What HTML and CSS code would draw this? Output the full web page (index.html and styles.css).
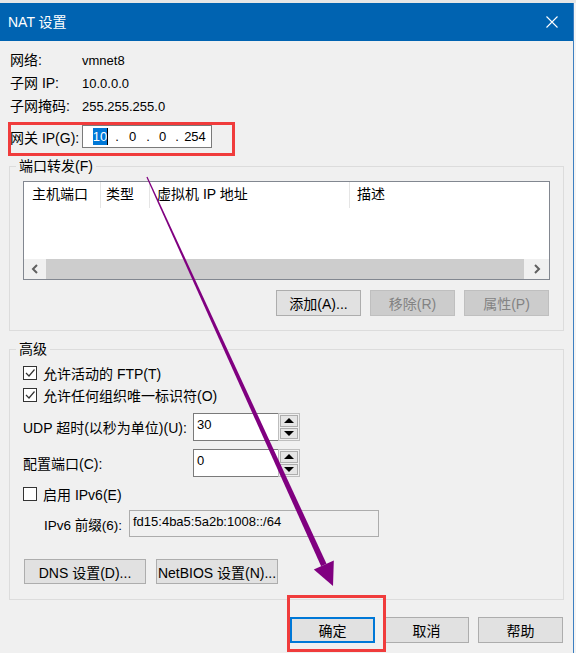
FILE: index.html
```html
<!DOCTYPE html>
<html lang="zh-CN">
<head>
  <meta charset="UTF-8">
  <title>NAT 设置</title>
  <link rel="stylesheet" href="styles.css">
</head>
<body>
  <div class="topstrip"></div>
  <div class="screen">
    <div class="dialog">
      <div class="titlebar">
        <span class="title">NAT 设置</span>
        <svg class="close" width="12" height="12" viewBox="0 0 12 12">
          <path d="M0.5 0.5 L11.5 11.5 M11.5 0.5 L0.5 11.5" stroke="#fff" stroke-width="1.1" fill="none"/>
        </svg>
      </div>

      <div class="info">
        <span class="lbl">网络:</span><span class="val">vmnet8</span>
        <span class="lbl">子网 IP:</span><span class="val">10.0.0.0</span>
        <span class="lbl">子网掩码:</span><span class="val">255.255.255.0</span>
      </div>

      <div class="gw-row">
        <span class="lbl">网关 IP(G):</span>
        <div class="ipbox">
          <span class="oct o1"><span class="sel">10</span><span class="caret"></span></span>
          <span class="dot">.</span>
          <span class="oct o2">0</span>
          <span class="dot">.</span>
          <span class="oct o3">0</span>
          <span class="dot">.</span>
          <span class="oct o4">254</span>
        </div>
      </div>

      <fieldset class="group port">
        <legend>端口转发(F)</legend>
        <div class="listview">
          <div class="lv-head">
            <div class="col c1">主机端口</div>
            <div class="col c2">类型</div>
            <div class="col c3">虚拟机 IP 地址</div>
            <div class="col c4">描述</div>
          </div>
          <div class="lv-body"></div>
          <div class="hscroll">
            <div class="sb-btn sb-left">
              <svg width="8" height="10" viewBox="0 0 8 10"><path d="M6 1 L2 5 L6 9" stroke="#606060" stroke-width="2" fill="none"/></svg>
            </div>
            <div class="sb-thumb"></div>
            <div class="sb-btn sb-right">
              <svg width="8" height="10" viewBox="0 0 8 10"><path d="M2 1 L6 5 L2 9" stroke="#606060" stroke-width="2" fill="none"/></svg>
            </div>
          </div>
        </div>
        <div class="btn-row">
          <button class="btn">添加(A)...</button>
          <button class="btn" disabled>移除(R)</button>
          <button class="btn" disabled>属性(P)</button>
        </div>
      </fieldset>

      <fieldset class="group adv">
        <legend>高级</legend>
        <div class="cb-row">
          <span class="cb checked"><svg width="12" height="12" viewBox="0 0 12 12"><path d="M2 6 L5 9 L10.5 2.5" stroke="#333" stroke-width="1.2" fill="none"/></svg></span>
          <span>允许活动的 FTP(T)</span>
        </div>
        <div class="cb-row">
          <span class="cb checked"><svg width="12" height="12" viewBox="0 0 12 12"><path d="M2 6 L5 9 L10.5 2.5" stroke="#333" stroke-width="1.2" fill="none"/></svg></span>
          <span>允许任何组织唯一标识符(O)</span>
        </div>
        <div class="field-row udp">
          <span class="field-lbl">UDP 超时(以秒为单位)(U):</span>
          <div class="spin">
            <div class="spin-field">30</div>
            <div class="spin-btns">
              <div class="spin-btn"><span class="tri up"></span></div>
              <div class="spin-btn"><span class="tri down"></span></div>
            </div>
          </div>
        </div>
        <div class="field-row cfg">
          <span class="field-lbl">配置端口(C):</span>
          <div class="spin">
            <div class="spin-field">0</div>
            <div class="spin-btns">
              <div class="spin-btn"><span class="tri up"></span></div>
              <div class="spin-btn"><span class="tri down"></span></div>
            </div>
          </div>
        </div>
        <div class="cb-row ipv6">
          <span class="cb"></span>
          <span>启用 IPv6(E)</span>
        </div>
        <div class="prefix-row">
          <span class="prefix-lbl">IPv6 前缀(6):</span>
          <div class="ro-field">fd15:4ba5:5a2b:1008::/64</div>
        </div>
        <div class="adv-btns">
          <button class="btn dns">DNS 设置(D)...</button>
          <button class="btn dns">NetBIOS 设置(N)...</button>
        </div>
      </fieldset>

      <div class="actions">
        <button class="btn default">确定</button>
        <button class="btn">取消</button>
        <button class="btn">帮助</button>
      </div>

      <div class="mark mark-gw"></div>
      <div class="mark mark-ok"></div>
    </div>
    <div class="side"></div>
  </div>

  <svg class="arrow" width="576" height="653" viewBox="0 0 576 653">
    <polygon points="147.5,176.7 146.4,177.3 321.1,566.2 326.5,563.8" fill="#800080"/>
    <polygon points="333,586 313.8,569.6 333.8,560.4" fill="#800080"/>
  </svg>
</body>
</html>
```

FILE: styles.css
```css
body {
  margin: 0;
  position: relative;
  width: 576px;
  height: 653px;
  overflow: hidden;
  background: #f0f0f0;
  font-family: "Liberation Sans", "Noto Sans CJK SC", sans-serif;
  font-size: 14px;
  color: #000;
}
.topstrip {
  height: 3px;
  background: #e6e6e6;
}
.screen {
  display: flex;
}
.dialog {
  position: relative;
  width: 573px;
  height: 650px;
  background: #f0f0f0;
  overflow: hidden;
}
.side {
  width: 2px;
  border-left: 1px solid #3c7fc1;
  background: #f4f4f4;
}

/* title bar */
.titlebar {
  height: 38px;
  background: #0063b1;
  display: flex;
  align-items: center;
  justify-content: space-between;
  padding: 0 15px 0 8px;
}
.title {
  color: #fff;
  font-size: 14px;
  line-height: 20px;
}

/* top info */
.info {
  display: grid;
  grid-template-columns: 72px auto;
  padding: 8px 0 0 10px;
  line-height: 23px;
}
.val {
  font-size: 13px;
}
.gw-row {
  display: flex;
  align-items: center;
  margin: 7px 0 0 10px;
  height: 23px;
}
.gw-row .lbl {
  width: 72px;
}
.ipbox {
  box-sizing: border-box;
  width: 130px;
  height: 23px;
  border: 1px solid #7a7a7a;
  background: #fff;
  display: flex;
  align-items: center;
  padding-left: 6px;
  font-size: 13px;
}
.oct, .dot {
  text-align: center;
}
.o1 { width: 23px; display: flex; justify-content: center; align-items: center; }
.o2 { width: 21px; }
.o3 { width: 19px; }
.o4 { width: 26px; }
.dot { width: 10px; }
.sel {
  background: #0078d7;
  color: #fff;
  line-height: 17px;
}
.caret {
  width: 1px;
  height: 17px;
  background: #000;
}

/* group boxes */
.group {
  box-sizing: border-box;
  width: 555px;
  margin: 8px 0 0 9px;
  border: 1px solid #dcdcdc;
  min-width: 0;
}
.group legend {
  margin-left: -7px;
  padding: 0 3px;
  line-height: 20px;
}
.port {
  padding: 5px 13px 14px 13px;
}
.listview {
  box-sizing: border-box;
  height: 99px;
  border: 1px solid #828790;
  background: #fff;
  display: flex;
  flex-direction: column;
}
.lv-head {
  display: flex;
  height: 26px;
}
.col {
  box-sizing: border-box;
  line-height: 24px;
  border-right: 1px solid #e5e5e5;
}
.c1 { width: 77px; padding-left: 8px; }
.c2 { width: 49px; padding-left: 5px; }
.c3 { width: 200px; padding-left: 7px; }
.c4 { flex: 1; padding-left: 7px; border-right: none; }
.lv-body {
  flex: 1;
}
.hscroll {
  display: flex;
  height: 20px;
  background: #f0f0f0;
}
.sb-btn {
  display: flex;
  align-items: center;
  justify-content: center;
}
.sb-left { width: 22px; }
.sb-right { width: 25px; }
.sb-thumb {
  flex: 1;
  background: #cdcdcd;
}

.btn {
  box-sizing: border-box;
  height: 26px;
  border: 1px solid #adadad;
  background: #e1e1e1;
  font-family: inherit;
  font-size: 14px;
  color: #000;
  padding: 0;
}
.btn:disabled {
  background: #cccccc;
  border-color: #bfbfbf;
  color: #838383;
}
.btn-row {
  display: flex;
  justify-content: flex-end;
  gap: 9px;
  margin: 10px 1px 0 0;
}
.btn-row .btn {
  width: 85px;
}

/* advanced */
.adv {
  padding: 3px 13px 15px 13px;
}
.cb-row {
  display: flex;
  align-items: center;
  height: 22px;
  gap: 6px;
}
.cb {
  box-sizing: border-box;
  width: 14px;
  height: 14px;
  border: 1px solid #333;
  background: #fff;
  display: flex;
  align-items: center;
  justify-content: center;
}
.field-row {
  display: flex;
  align-items: center;
  height: 28px;
}
.udp { margin-top: 7px; }
.cfg { margin-top: 8px; }
.ipv6 { margin-top: 6px; }
.field-lbl {
  width: 170px;
}
.spin {
  display: flex;
  width: 107px;
  height: 28px;
}
.spin-field {
  flex: 1;
  background: #fff;
  border: 1px solid #7a7a7a;
  border-right: none;
  font-size: 13px;
  padding: 2px 3px;
  line-height: 18px;
}
.spin-btns {
  box-sizing: border-box;
  width: 22px;
  border: 1px solid #bdbdbd;
  padding: 1px;
  display: flex;
  flex-direction: column;
  gap: 1px;
  background: #f0f0f0;
}
.spin-btn {
  flex: 1;
  border: 1px solid #adadad;
  background: #e5e5e5;
  display: flex;
  align-items: center;
  justify-content: center;
}
.tri {
  width: 0;
  height: 0;
  border-left: 5px solid transparent;
  border-right: 5px solid transparent;
}
.tri.up { border-bottom: 5px solid #000; }
.tri.down { border-top: 5px solid #000; }

.prefix-row {
  display: flex;
  align-items: center;
  margin: 5px 0 0 21px;
  height: 27px;
}
.prefix-lbl {
  width: 85px;
  font-size: 13.5px;
}
.ro-field {
  box-sizing: border-box;
  width: 250px;
  height: 27px;
  border: 1px solid #acacac;
  background: #f0f0f0;
  font-size: 13px;
  padding: 2px 3px;
  line-height: 18px;
}
.adv-btns {
  display: flex;
  gap: 10px;
  margin: 22px 0 0 1px;
}
.btn.dns {
  width: 122px;
  height: 25px;
}

/* bottom buttons */
.actions {
  display: flex;
  justify-content: flex-end;
  gap: 9px;
  margin: 17px 10px 0 0;
}
.actions .btn {
  width: 85px;
}
.btn.default {
  border: 2px solid #0078d7;
}

/* red annotation boxes */
.mark {
  position: absolute;
  box-sizing: border-box;
  border: 3px solid #f03c3c;
}
.mark-gw {
  left: 8px;
  top: 119px;
  width: 227px;
  height: 34px;
}
.mark-ok {
  left: 287px;
  top: 592px;
  width: 99px;
  height: 57px;
}

.arrow {
  position: absolute;
  left: 0;
  top: 0;
  pointer-events: none;
}
```
